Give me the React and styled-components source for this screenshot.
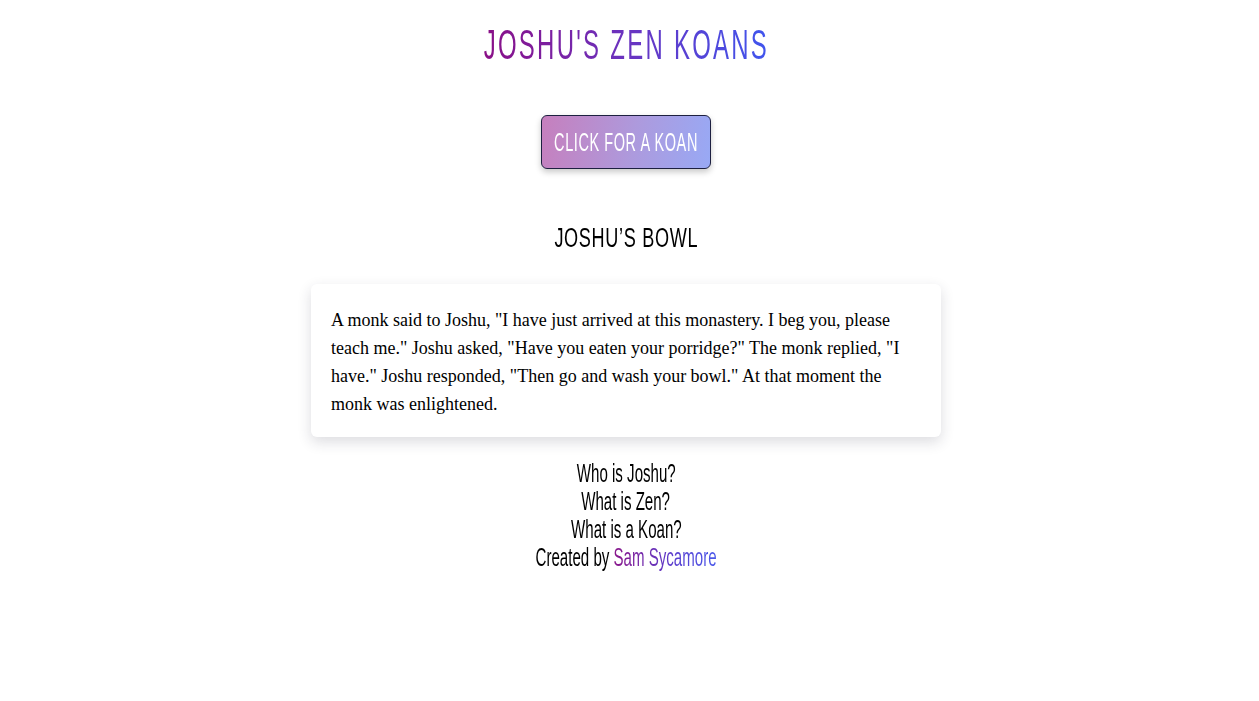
import React from "react";
import styled, { createGlobalStyle } from "styled-components";

const Global = createGlobalStyle`
  html, body { margin: 0; padding: 0; background: #ffffff; }
  body { font-family: "Liberation Serif", serif; color: #000; }
`;

const Page = styled.main`
  display: flex;
  flex-direction: column;
  align-items: center;
  padding: 17px 7px 0 0;
`;

const Squeeze = styled.span`
  display: inline-block;
  white-space: nowrap;
  flex-shrink: 0;
  transform: scaleX(${(p) => p.$k || 0.62});
  transform-origin: center;
`;

const Title = styled.h1`
  margin: 0;
  height: 55px;
  font-family: "Liberation Sans", sans-serif;
  font-weight: 400;
  font-size: 42px;
  line-height: 55px;
  letter-spacing: 4px;
  text-align: center;
  display: flex;
  justify-content: center;
`;

const GradientText = styled.span`
  background: linear-gradient(90deg, #8a0f86 0%, #6a33c0 50%, #3f55ee 100%);
  -webkit-background-clip: text;
  background-clip: text;
  color: transparent;
`;

const KoanButton = styled.button`
  margin-top: 43px;
  width: 170px;
  height: 54px;
  border: 1px solid #1d2040;
  border-radius: 6px;
  background: linear-gradient(100deg, #c67fbd 0%, #ad9add 55%, #98a9f5 100%);
  box-shadow: 0 3px 6px rgba(0, 0, 0, 0.22);
  color: #ffffff;
  font-family: "Liberation Sans", sans-serif;
  font-size: 25px;
  letter-spacing: 1px;
  line-height: 1;
  display: flex;
  align-items: center;
  justify-content: center;
  padding: 0;
  cursor: pointer;
  overflow: visible;
`;

const KoanTitle = styled.h2`
  margin: 53px 0 0;
  height: 32px;
  font-family: "Liberation Sans", sans-serif;
  font-weight: 400;
  font-size: 27px;
  line-height: 32px;
  letter-spacing: 1px;
  color: #000;
  display: flex;
  justify-content: center;
`;

const Card = styled.article`
  margin-top: 30px;
  width: 630px;
  box-sizing: border-box;
  padding: 22px 20px 19px;
  background: #fff;
  border-radius: 6px;
  box-shadow: 0 5px 14px rgba(40, 40, 60, 0.16);
`;

const KoanText = styled.p`
  margin: 0;
  font-family: "Liberation Serif", serif;
  font-size: 18px;
  line-height: 28px;
  color: #000;
`;

const Footer = styled.footer`
  margin-top: 22px;
  display: flex;
  flex-direction: column;
  align-items: center;
  font-family: "Liberation Sans", sans-serif;
  font-size: 26px;
  line-height: 28px;
  color: #000;
`;

const FooterLine = styled.div`
  display: flex;
  justify-content: center;
  height: 28px;
`;

const AuthorLink = styled.a`
  text-decoration: none;
  background: linear-gradient(90deg, #8a168a 0%, #5a3fd0 60%, #4958ea 100%);
  -webkit-background-clip: text;
  background-clip: text;
  color: transparent;
`;

export default function App() {
  return (
    <>
      <Global />
      <Page>
        <Title>
          <Squeeze $k={0.57}>
            <GradientText>JOSHU'S ZEN KOANS</GradientText>
          </Squeeze>
        </Title>
        <KoanButton>
          <Squeeze $k={0.58}>CLICK FOR A KOAN</Squeeze>
        </KoanButton>
        <KoanTitle>
          <Squeeze $k={0.67}>JOSHU’S BOWL</Squeeze>
        </KoanTitle>
        <Card>
          <KoanText>
            A monk said to Joshu, "I have just arrived at this monastery. I beg
            you, please teach me." Joshu asked, "Have you eaten your porridge?"
            The monk replied, "I have." Joshu responded, "Then go and wash your
            bowl." At that moment the monk was enlightened.
          </KoanText>
        </Card>
        <Footer>
          <FooterLine>
            <Squeeze $k={0.58}>Who is Joshu?</Squeeze>
          </FooterLine>
          <FooterLine>
            <Squeeze $k={0.58}>What is Zen?</Squeeze>
          </FooterLine>
          <FooterLine>
            <Squeeze $k={0.58}>What is a Koan?</Squeeze>
          </FooterLine>
          <FooterLine>
            <Squeeze $k={0.58}>
              Created by <AuthorLink href="#">Sam Sycamore</AuthorLink>
            </Squeeze>
          </FooterLine>
        </Footer>
      </Page>
    </>
  );
}
